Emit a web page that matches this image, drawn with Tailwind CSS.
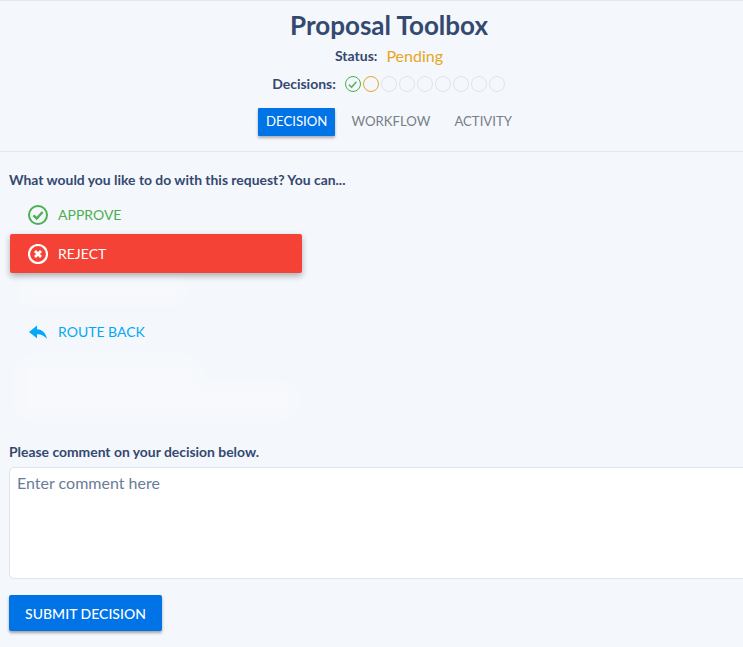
<!DOCTYPE html>
<html lang="en">
  <head>
    <meta charset="UTF-8" />
    <meta name="viewport" content="width=device-width, initial-scale=1.0" />
    <title>Proposal Toolbox</title>
    <script src="https://cdn.jsdelivr.net/npm/@tailwindcss/browser@4"></script>
  </head>
  <body class="bg-[#f4f7fc] font-['Lato',sans-serif] h-[647px] overflow-hidden">
    <div class="w-[778px]">
      <header class="h-[152px] border-t border-b border-[#e2e7f0] flex flex-col items-center">
        <h1 class="mt-[6px] h-[36px] leading-[36px] text-[26px] font-bold text-[#34496f]">Proposal Toolbox</h1>
        <div class="mt-[1px] h-[24px] flex items-center text-sm font-bold text-[#34496f]">
          <span>Status:</span>
          <span class="ml-[9px] text-base font-normal text-[#e5a624]">Pending</span>
        </div>
        <div class="mt-[4px] h-[24px] flex items-center text-sm font-bold text-[#34496f] mr-[1px]">
          <span class="mr-[9px]">Decisions:</span>
          <div class="flex gap-[2px]">
            <span class="w-[16px] h-[16px] rounded-full border-[1.5px] border-[#4caf50] flex items-center justify-center">
              <svg viewBox="0 0 12 12" class="w-[11px] h-[11px]" fill="none" stroke="#4caf50" stroke-width="1.5"><path d="M2 6.2 5 9l5.2-6" /></svg>
            </span>
            <span class="w-[16px] h-[16px] rounded-full border-[1.5px] border-[#e5a624]"></span>
            <span class="w-[16px] h-[16px] rounded-full border-[1.5px] border-[#dfe5ef]"></span>
            <span class="w-[16px] h-[16px] rounded-full border-[1.5px] border-[#dfe5ef]"></span>
            <span class="w-[16px] h-[16px] rounded-full border-[1.5px] border-[#dfe5ef]"></span>
            <span class="w-[16px] h-[16px] rounded-full border-[1.5px] border-[#dfe5ef]"></span>
            <span class="w-[16px] h-[16px] rounded-full border-[1.5px] border-[#dfe5ef]"></span>
            <span class="w-[16px] h-[16px] rounded-full border-[1.5px] border-[#dfe5ef]"></span>
            <span class="w-[16px] h-[16px] rounded-full border-[1.5px] border-[#dfe5ef]"></span>
          </div>
        </div>
        <nav class="mt-[12px] flex items-center gap-[8px] text-[13.2px]">
          <a class="h-[28px] px-[8px] flex items-center rounded-[1px] bg-[#0073e6] text-white shadow-[0_2px_3px_rgba(0,0,0,0.3)]">DECISION</a>
          <a class="h-[28px] px-[8px] flex items-center text-[#777f88]">WORKFLOW</a>
          <a class="h-[28px] px-[8px] flex items-center text-[#777f88]">ACTIVITY</a>
        </nav>
      </header>

      <main class="px-[9px]">
        <p class="mt-[19px] h-[18px] leading-[18px] text-[13.9px] font-bold text-[#34496f]">What would you like to do with this request? You can...</p>

        <div class="mt-[7px] w-[293px]">
          <div class="h-[38px] pl-[19px] flex items-center gap-[10px] text-sm text-[#4caf50]">
            <svg viewBox="0 0 20 20" class="w-[20px] h-[20px]" fill="none" stroke="#4caf50" stroke-width="2"><circle cx="10" cy="10" r="9" /><path d="M5.5 10.3 8.7 13.5 14.6 7" stroke-width="2.4" /></svg>
            APPROVE
          </div>
          <div class="ml-[1px] h-[39px] pl-[18px] flex items-center gap-[10px] text-sm text-white bg-[#f44336] rounded-[2px] shadow-[0_3px_6px_rgba(0,0,0,0.3)]">
            <svg viewBox="0 0 20 20" class="w-[20px] h-[20px]" fill="none" stroke="#fff" stroke-width="2.2"><circle cx="10" cy="10" r="9" /><path d="M7 7l6 6M13 7l-6 6" stroke-width="2.8" /></svg>
            REJECT
          </div>
          <div class="h-[39px] flex items-center">
            <div class="ml-[9px] w-[170px] h-[26px] rounded-xl bg-white/25 blur-[5px]"></div>
          </div>
          <div class="h-[39px] pl-[19px] flex items-center gap-[10px] text-sm text-[#03a9f4]">
            <svg viewBox="0 0 20 20" class="w-[20px] h-[20px]" fill="#03a9f4"><path d="M1 10 9 3.5V7.2C14.5 7.6 18 11 19 17 16.5 13.6 13.5 12.3 9 12.2V16.2Z" /></svg>
            ROUTE BACK
          </div>
          <div class="relative h-[78px] blur-[6px]">
            <div class="absolute left-[5px] top-[4px] w-[190px] h-[66px] rounded-l-2xl rounded-tr-2xl bg-white/25"></div>
            <div class="absolute left-[195px] top-[30px] w-[96px] h-[40px] rounded-r-2xl bg-white/25"></div>
          </div>
        </div>

        <p class="mt-[14px] h-[18px] leading-[18px] text-[13.9px] font-bold text-[#34496f]">Please comment on your decision below.</p>
        <textarea class="mt-[6px] block w-[760px] h-[112px] px-[7px] py-[5px] text-base leading-[20px] bg-white border border-[#dfe5ef] rounded-[5px] resize-none text-[#34496f] placeholder:text-[#6a7c97]" placeholder="Enter comment here"></textarea>
        <button class="mt-[16px] h-[36px] w-[153px] pt-[1px] rounded-[2px] bg-[#0073e6] text-white text-sm font-medium shadow-[0_2px_3px_rgba(0,0,0,0.35)]">SUBMIT DECISION</button>
      </main>
    </div>
  </body>
</html>
